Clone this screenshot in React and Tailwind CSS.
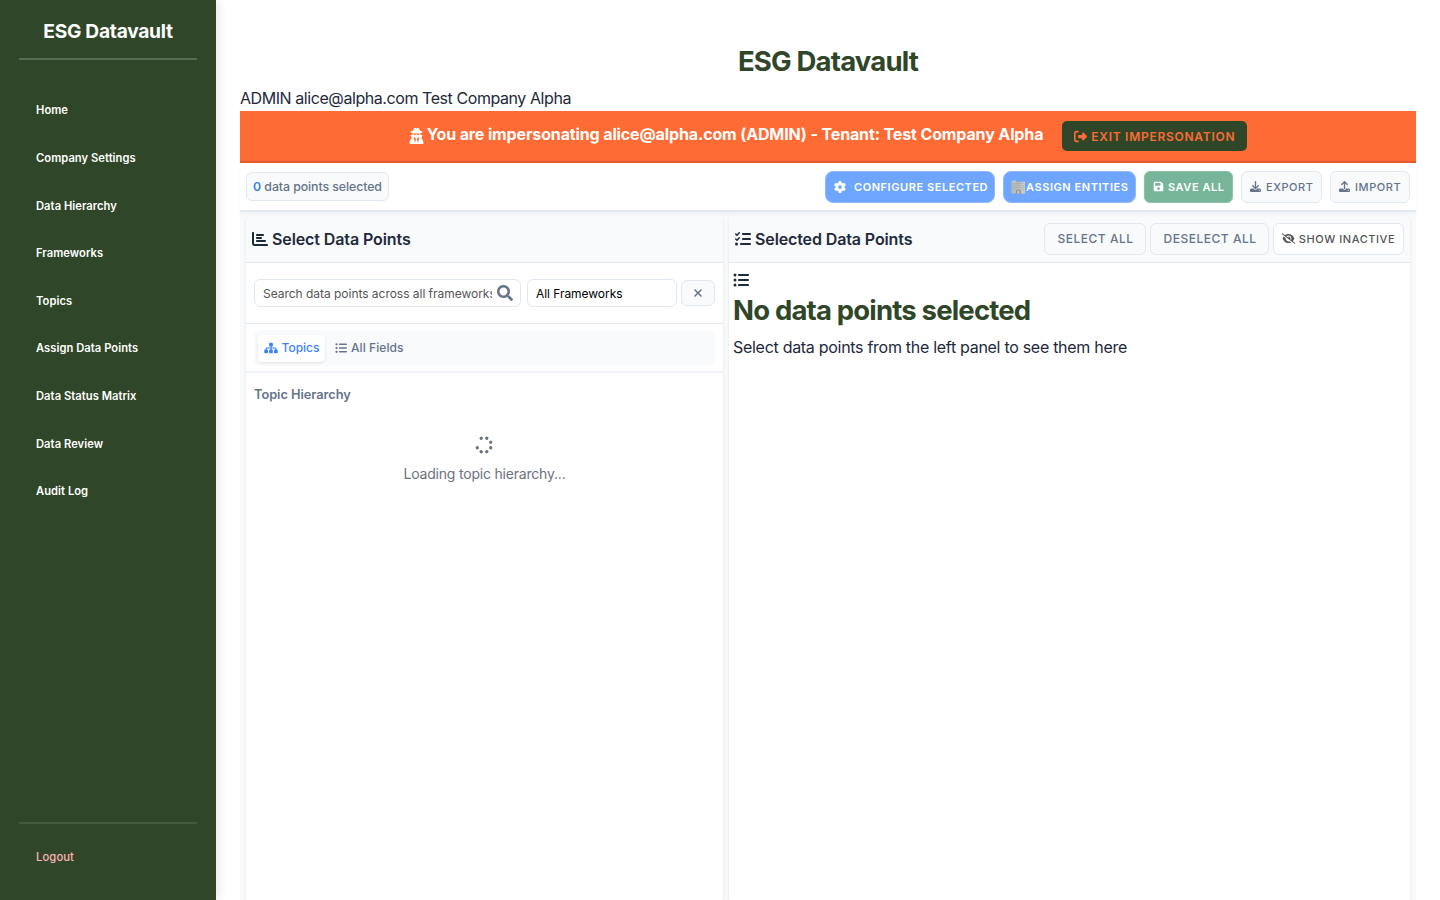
import { FaUserSecret, FaRightFromBracket, FaGear, FaFloppyDisk, FaDownload, FaUpload, FaChartBar, FaListCheck, FaListUl, FaSitemap, FaXmark, FaSpinner, FaEyeSlash } from "react-icons/fa6";
import { FaSearch } from "react-icons/fa";

const links = ["Home", "Company Settings", "Data Hierarchy", "Frameworks", "Topics", "Assign Data Points", "Data Status Matrix", "Data Review", "Audit Log"];

function Building() {
  return (
    <svg viewBox="0 0 15 14" className="w-[15px] h-[14px] shrink-0">
      <path d="M1 .6h4v1.600H1z" fill="#c5c9c8" />
      <path d="M.5 1.800h13.500V13.500H.5z" fill="#b9bdba" />
      <path d="M10.500 1.800H14V13.500h-3.500z" fill="#c9ccc9" />
      <path d="M1.500 3.500h8M1.500 5.500h8M1.500 7.500h8M1.500 9.500h8M11.200 3.500h2M11.200 5.500h2M11.200 7.500h2M11.200 9.500h2" stroke="#a6adae" strokeWidth=".7" />
      <path d="M5 10.300h4.500v3.200H5z" fill="#8b9194" />
      <path d="M6.500 11h1.500v2.500H6.500z" fill="#d7d9d6" />
    </svg>
  );
}

function Sidebar() {
  return (
    <aside className="w-[216px] shrink-0 h-full bg-[#2f4728] flex flex-col px-[19px] text-white shadow-[2px_0_10px_rgba(0,0,0,0.1)]">
      <div className="h-[60px] shrink-0 border-b-2 border-white/20 pt-[17px] text-center text-[19.2px] leading-[28px] font-bold tracking-[-0.27px]">ESG Datavault</div>
      <nav className="pt-[27px] flex flex-col">
        {links.map((l) => (
          <a key={l} className="h-[47.6px] flex items-center pl-[17px] text-[11.2px] font-semibold tracking-[0.04px]">{l}</a>
        ))}
      </nav>
      <div className="mt-auto h-[78px] shrink-0 border-t-2 border-white/10 pl-[17px] pt-[24px] text-[11.2px] leading-[18px] font-medium tracking-[0.12px] text-[#ffb3b3]">Logout</div>
    </aside>
  );
}

export default function App() {
  return (
    <div className="w-[1440px] h-[900px] overflow-hidden flex bg-white text-[#1e293b] font-['Inter',sans-serif] whitespace-nowrap">
      <Sidebar />
      <main className="w-[1224px] px-6 flex flex-col shrink-0">
        <h1 className="pt-[41px] h-[85px] shrink-0 text-center text-[27.5px] leading-[40px] font-bold tracking-[-0.8px] text-[#2f4728]">ESG Datavault</h1>
        <p className="h-[26px] shrink-0 text-[16px] leading-[26px] tracking-[-0.43px]">ADMIN alice@alpha.com Test Company Alpha</p>
        <div className="h-[52px] shrink-0 bg-[#ff6b35] border-b-2 border-[#e55a2b] flex justify-center items-center text-white">
          <FaUserSecret className="w-[15px] h-[16px] mr-[3px] -mt-px" />
          <span className="text-[16px] font-bold tracking-[-0.13px] -mt-[4px]">You are impersonating alice@alpha.com (ADMIN) - Tenant: Test Company Alpha</span>
          <button className="ml-[19px] w-[185px] h-[30px] rounded-[5px] bg-[#2f4728] text-[#ff6b35] flex items-center pl-[12px] gap-1 text-[12px] font-semibold tracking-[0.73px]">
            <FaRightFromBracket className="w-[13px] h-[13px]" /><span className="pt-px">EXIT IMPERSONATION</span>
          </button>
        </div>
        <div className="relative z-10 h-[49px] shrink-0 bg-white border-b-2 border-[#e2e8f0] px-[6px] flex items-center shadow-[0_2px_4px_rgba(0,0,0,0.04)]">
          <div className="w-[143px] h-[29px] rounded-[6px] border border-[#e2e8f0] bg-[#f8fafc] flex items-center justify-center text-[12.3px] font-medium text-[#64748b] tracking-[-0.06px]"><span className="pt-px"><b className="font-semibold text-[#3b82f6]">0</b> data points selected</span></div>
          <div className="ml-auto flex gap-2 text-[11px] font-semibold tracking-[0.56px] text-white">
            <button className="w-[170px] h-[32px] rounded-[8px] border border-[#93b9fb] bg-[#6ea6ff] flex items-center pl-[8px]"><FaGear className="w-[12px] h-[12px] mr-[8px]" /><span className="pt-px">CONFIGURE SELECTED</span></button>
            <button className="w-[133px] h-[32px] rounded-[8px] border border-[#93b9fb] bg-[#6ea6ff] flex items-center pl-[7px]"><Building /><span className="pt-px">ASSIGN ENTITIES</span></button>
            <button className="w-[89px] h-[32px] rounded-[6px] border border-[#8cc4a8] bg-[#76b598] flex items-center pl-[8px]"><FaFloppyDisk className="w-[11px] h-[11px] mr-1" /><span className="pt-px">SAVE ALL</span></button>
            <button className="w-[81px] h-[32px] rounded-[6px] border border-[#e2e8f0] bg-[#f8fafc] text-[#64748b] font-medium flex items-center pl-[8px]"><FaDownload className="w-[11px] h-[11px] mr-[5px]" /><span className="pt-px">EXPORT</span></button>
            <button className="w-[80px] h-[32px] rounded-[6px] border border-[#e2e8f0] bg-[#f8fafc] text-[#64748b] font-medium flex items-center pl-[8px]"><FaUpload className="w-[11px] h-[11px] mr-[5px]" /><span className="pt-px">IMPORT</span></button>
          </div>
        </div>
        <div className="flex-1 min-h-0 bg-[#f8fafc] flex gap-[6px] px-[6px] pt-[3px]">
          <section className="w-[477px] bg-white rounded-t-[6px] shadow-[0_1px_3px_rgba(0,0,0,0.1)] flex flex-col">
            <header className="h-[48px] shrink-0 bg-[#f8fafc] rounded-t-[6px] border-b border-[#e2e8f0] flex items-center pl-[6px] text-[16px] font-semibold tracking-[-0.1px]"><FaChartBar className="w-4 h-4 mr-1" /><span>Select Data Points</span></header>
            <div className="h-[61px] shrink-0 border-b border-[#e2e8f0] flex items-center px-2 text-[12px]">
              <div className="w-[267px] h-[28px] rounded-[6px] border border-[#e2e8f0] bg-white flex items-center pl-2 pr-[7px] text-[#555]"><span className="w-[229px] pt-px overflow-hidden tracking-[-0.03px]">Search data points across all frameworks...</span><FaSearch className="ml-auto w-4 h-4 text-[#64748b]" /></div>
              <div className="ml-[6px] w-[150px] h-[28px] rounded-[6px] border border-[#e2e8f0] flex items-center pl-2 text-black"><span className="pt-px tracking-[-0.05px]">All Frameworks</span></div>
              <button className="ml-1 w-[34px] h-[26px] rounded-[6px] border border-[#e2e8f0] bg-[#f8fafc] flex items-center justify-center text-[#64748b]"><FaXmark className="w-[12px] h-[12px]" /></button>
            </div>
            <div className="h-[49px] shrink-0 border-b-2 border-[#f1f5f9] px-2 pt-[6px]">
              <div className="h-[36px] rounded-[6px] bg-[#f8fafc] p-1 flex items-center text-[12px] font-medium text-[#64748b]">
                <div className="w-[67px] h-[27px] rounded-[4px] bg-white shadow-[0_1px_3px_rgba(0,0,0,0.1)] text-[#3b82f6] flex items-center justify-center gap-1"><FaSitemap className="w-[14px] h-3" /><span>Topics</span></div>
                <div className="ml-[10px] flex items-center gap-1"><FaListUl className="w-3 h-3" /><span className="tracking-[0.08px]">All Fields</span></div>
              </div>
            </div>
            <h4 className="pl-2 pt-[12px] text-[12.8px] leading-[20px] font-semibold tracking-[-0.04px] text-[#64748b]">Topic Hierarchy</h4>
            <div className="pt-[32px] flex flex-col items-center text-[14px] text-[#6b7280]"><FaSpinner className="w-[18px] h-[18px] -mt-px mb-px mr-px -rotate-[112.5deg]" /><span className="mt-[9px] leading-5 tracking-[-0.2px]">Loading topic hierarchy...</span></div>
          </section>
          <section className="w-[681px] bg-white rounded-t-[6px] shadow-[0_1px_3px_rgba(0,0,0,0.1)] flex flex-col">
            <header className="h-[48px] shrink-0 bg-[#f8fafc] rounded-t-[6px] border-b border-[#e2e8f0] flex items-center px-[6px] text-[16px] font-semibold tracking-[-0.12px]">
              <FaListCheck className="w-4 h-4 mr-1" /><span>Selected Data Points</span>
              <div className="ml-auto flex gap-1 text-[12px] font-medium tracking-[0.52px] text-[#64748b]">
                <button className="w-[102px] h-[32px] rounded-[6px] border border-[#e2e8f0] bg-[#f8fafc] pl-px">SELECT ALL</button>
                <button className="w-[119px] h-[32px] rounded-[6px] border border-[#e2e8f0] bg-[#f8fafc] pl-px">DESELECT ALL</button>
                <button className="w-[131px] h-[32px] rounded-[6px] border border-[#e2e8f0] bg-white text-[#555] flex items-center justify-center gap-1 text-[11px] tracking-[0.56px]"><FaEyeSlash className="w-[13px] h-[11px]" /><span className="pt-px">SHOW INACTIVE</span></button>
              </div>
            </header>
            <div className="pl-1 pt-[9px]">
              <FaListUl className="w-4 h-4" />
              <h2 className="mt-[2px] text-[27.5px] leading-[40px] font-bold tracking-[-0.82px] text-[#2f4728]">No data points selected</h2>
              <p className="mt-[4px] text-[16px] leading-[26px] tracking-[-0.29px]">Select data points from the left panel to see them here</p>
            </div>
          </section>
        </div>
      </main>
    </div>
  );
}
